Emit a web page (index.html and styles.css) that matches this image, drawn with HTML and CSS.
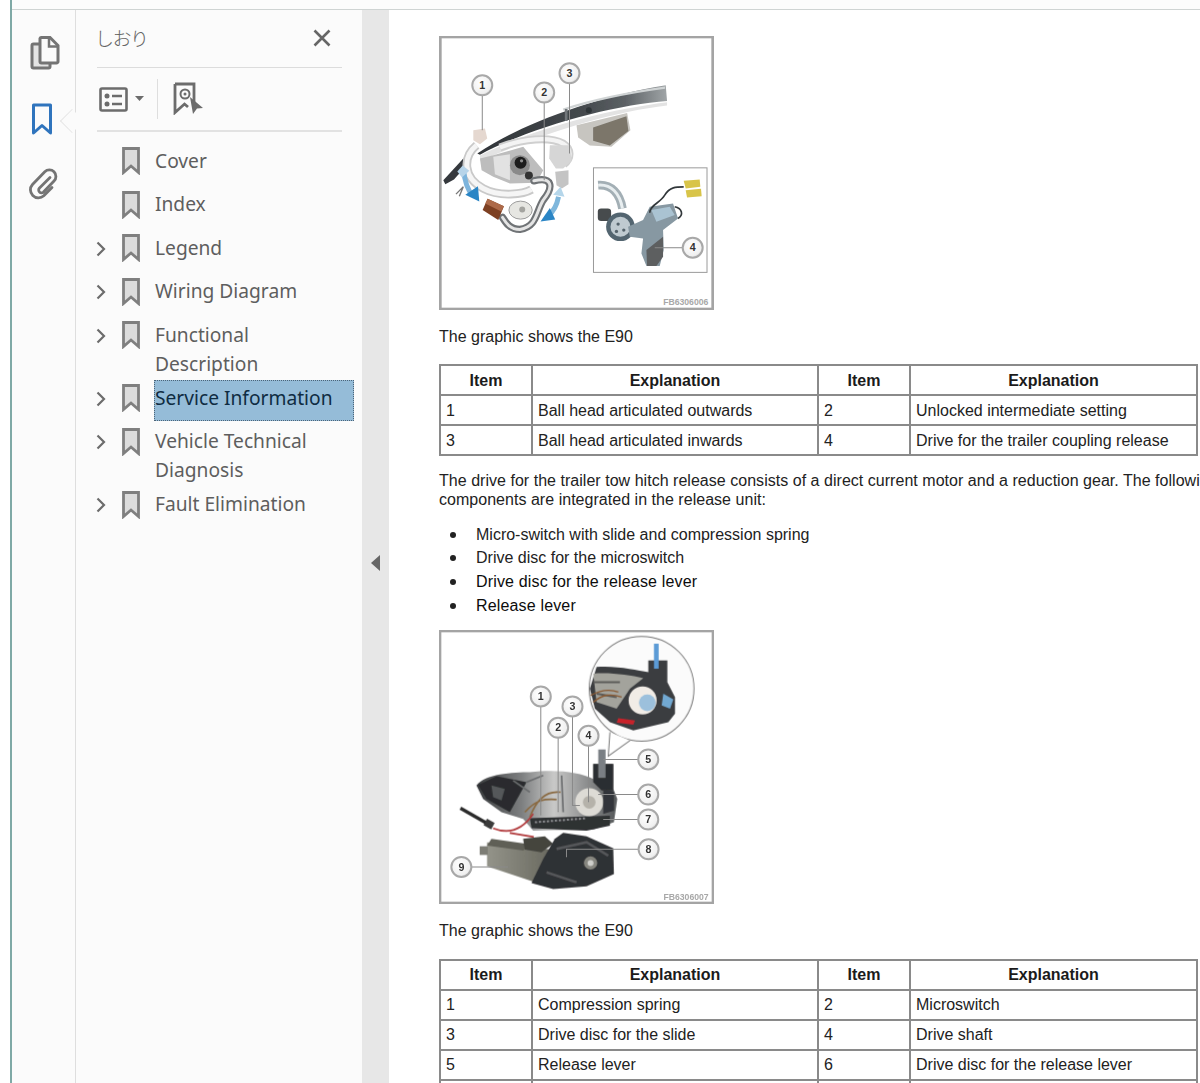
FILE: index.html
```html
<!DOCTYPE html>
<html lang="en">
<head>
<meta charset="utf-8">
<title>Service Information</title>
<link rel="stylesheet" href="styles.css">
</head>
<body>
<div class="window">
  <div class="topbar"></div>
  <div class="app">
    <nav class="rail">
      <svg class="rail-icon rail-pages" viewBox="0 0 30 34" width="30" height="34"><path d="M9 8H3.500A1.500 1.500 0 0 0 2 9.500V30.500A1.500 1.500 0 0 0 3.500 32H18.500A1.500 1.500 0 0 0 20 30.500V27" fill="#e4e4e4" stroke="#747474" stroke-width="3"/><path d="M10 2.500A1.500 1.500 0 0 1 11.500 1.500H20L28 9.500V25.500A1.500 1.500 0 0 1 26.500 27H11.500A1.500 1.500 0 0 1 10 25.500Z" fill="#fbfbfb" stroke="#747474" stroke-width="3"/><path d="M19 2V10.500H28" fill="none" stroke="#747474" stroke-width="2.500"/></svg>
      <svg class="rail-icon rail-mark" viewBox="0 0 22 33" width="22" height="33"><path d="M2.500 2H19.500V30L11 22.500L2.500 30Z" fill="#fbfbfb" stroke="#2f74bd" stroke-width="3" stroke-linejoin="round"/></svg>
      <svg class="rail-icon rail-clip" viewBox="0 0 30 32" width="30" height="32"><path d="M22 9.500L11.500 20a2.800 2.800 0 0 0 4 4L26 13a6.500 6.500 0 0 0 -9.200 -9.200L4.500 16.500a8 8 0 0 0 11.300 11.300L24 19.500" fill="none" stroke="#747474" stroke-width="2.800" stroke-linecap="round"/></svg>
      <span class="notch"></span>
    </nav>

    <aside class="panel">
      <header class="panel-head">
        <span class="panel-title">しおり</span>
        <svg class="close" viewBox="0 0 18 18" width="18" height="18"><path d="M1.500 1.500L16.500 16.500M16.500 1.500L1.500 16.500" stroke="#666" stroke-width="2.600"/></svg>
      </header>
      <div class="tools">
        <svg viewBox="0 0 29 25" width="29" height="25"><rect x="1.500" y="1.500" width="26" height="22" rx="1.500" fill="#fbfbfb" stroke="#6c6c6c" stroke-width="2.600"/><circle cx="8" cy="9" r="2.500" fill="#6c6c6c"/><circle cx="8" cy="17" r="2.500" fill="#6c6c6c"/><path d="M13 9H23M13 17H23" stroke="#6c6c6c" stroke-width="2.500"/></svg>
        <svg class="caret" viewBox="0 0 9 5" width="9" height="5"><path d="M0 0H9L4.500 5Z" fill="#6c6c6c"/></svg>
        <span class="tool-sep"></span>
        <svg class="find" viewBox="0 0 30 33" width="30" height="33"><path d="M2 2H21V23M15 25L11.500 22L2 30.500V2" fill="#fbfbfb" stroke="#6c6c6c" stroke-width="2.800"/><circle cx="12" cy="12" r="4.500" fill="#fbfbfb" stroke="#6c6c6c" stroke-width="2"/><circle cx="12" cy="12" r="1.500" fill="#6c6c6c"/><path d="M17 15L30 26L24 26.500L20 32Z" fill="#6c6c6c"/></svg>
      </div>
      <ul class="tree">
        <li class="node"><span class="twist"></span><svg class="mark" viewBox="0 0 18 28" width="18" height="28"><path d="M1.500 1.500H16.500V25.500L9 19L1.500 25.500Z" fill="#dcdcdc" stroke="#7f7f7f" stroke-width="2.800"/></svg><span class="label">Cover</span></li>
        <li class="node"><span class="twist"></span><svg class="mark" viewBox="0 0 18 28" width="18" height="28"><path d="M1.500 1.500H16.500V25.500L9 19L1.500 25.500Z" fill="#dcdcdc" stroke="#7f7f7f" stroke-width="2.800"/></svg><span class="label">Index</span></li>
        <li class="node"><svg class="twist" viewBox="0 0 10 16" width="10" height="16"><path d="M1.500 1.500L8 8L1.500 14.500" fill="none" stroke="#6c6c6c" stroke-width="2.200"/></svg><svg class="mark" viewBox="0 0 18 28" width="18" height="28"><path d="M1.500 1.500H16.500V25.500L9 19L1.500 25.500Z" fill="#dcdcdc" stroke="#7f7f7f" stroke-width="2.800"/></svg><span class="label">Legend</span></li>
        <li class="node"><svg class="twist" viewBox="0 0 10 16" width="10" height="16"><path d="M1.500 1.500L8 8L1.500 14.500" fill="none" stroke="#6c6c6c" stroke-width="2.200"/></svg><svg class="mark" viewBox="0 0 18 28" width="18" height="28"><path d="M1.500 1.500H16.500V25.500L9 19L1.500 25.500Z" fill="#dcdcdc" stroke="#7f7f7f" stroke-width="2.800"/></svg><span class="label">Wiring Diagram</span></li>
        <li class="node"><svg class="twist" viewBox="0 0 10 16" width="10" height="16"><path d="M1.500 1.500L8 8L1.500 14.500" fill="none" stroke="#6c6c6c" stroke-width="2.200"/></svg><svg class="mark" viewBox="0 0 18 28" width="18" height="28"><path d="M1.500 1.500H16.500V25.500L9 19L1.500 25.500Z" fill="#dcdcdc" stroke="#7f7f7f" stroke-width="2.800"/></svg><span class="label">Functional Description</span></li>
        <li class="node"><svg class="twist" viewBox="0 0 10 16" width="10" height="16"><path d="M1.500 1.500L8 8L1.500 14.500" fill="none" stroke="#6c6c6c" stroke-width="2.200"/></svg><svg class="mark" viewBox="0 0 18 28" width="18" height="28"><path d="M1.500 1.500H16.500V25.500L9 19L1.500 25.500Z" fill="#dcdcdc" stroke="#7f7f7f" stroke-width="2.800"/></svg><span class="label selected">Service Information</span></li>
        <li class="node"><svg class="twist" viewBox="0 0 10 16" width="10" height="16"><path d="M1.500 1.500L8 8L1.500 14.500" fill="none" stroke="#6c6c6c" stroke-width="2.200"/></svg><svg class="mark" viewBox="0 0 18 28" width="18" height="28"><path d="M1.500 1.500H16.500V25.500L9 19L1.500 25.500Z" fill="#dcdcdc" stroke="#7f7f7f" stroke-width="2.800"/></svg><span class="label">Vehicle Technical Diagnosis</span></li>
        <li class="node"><svg class="twist" viewBox="0 0 10 16" width="10" height="16"><path d="M1.500 1.500L8 8L1.500 14.500" fill="none" stroke="#6c6c6c" stroke-width="2.200"/></svg><svg class="mark" viewBox="0 0 18 28" width="18" height="28"><path d="M1.500 1.500H16.500V25.500L9 19L1.500 25.500Z" fill="#dcdcdc" stroke="#7f7f7f" stroke-width="2.800"/></svg><span class="label">Fault Elimination</span></li>
      </ul>
    </aside>

    <div class="gutter"><svg viewBox="0 0 9 16" width="9" height="16"><path d="M9 0V16L0 8Z" fill="#666"/></svg></div>

    <main class="doc">
      <svg class="figure" viewBox="28 17 824 823" width="275" height="274">
        <defs>
          <filter id="soft" x="-5%" y="-5%" width="110%" height="110%"><feGaussianBlur stdDeviation="2"/></filter>
          <linearGradient id="bar" x1="0" x2="1" y1="0" y2="0"><stop offset="0" stop-color="#303438"/><stop offset=".55" stop-color="#44494d"/><stop offset=".78" stop-color="#5c6165"/><stop offset="1" stop-color="#a0a5a7"/></linearGradient>
          <radialGradient id="ball" cx=".42" cy=".38" r=".72"><stop offset="0" stop-color="#fff"/><stop offset=".72" stop-color="#f0f0f0"/><stop offset="1" stop-color="#bcbcbc"/></radialGradient>
          <linearGradient id="motor" x1="0" x2="1"><stop offset="0" stop-color="#94948a"/><stop offset="1" stop-color="#6a6a60"/></linearGradient>
          <linearGradient id="case" x1="0" x2="1"><stop offset="0" stop-color="#3b3d3f"/><stop offset=".32" stop-color="#7d7f80"/><stop offset=".55" stop-color="#c9c9c8"/><stop offset="1" stop-color="#55585a"/></linearGradient>
        </defs>
        <rect x="31" y="20" width="818" height="817" fill="#fff" stroke="#a4a4a4" stroke-width="8"/>
        <g filter="url(#soft)">
          <path d="M40 450L100 385L118 396L72 448L46 462Z" fill="#34383c"/>
          <path d="M78 492L100 470L88 498" fill="none" stroke="#777" stroke-width="4"/>
          <path d="M440 285L592 248L602 300L545 350L480 346L445 322Z" fill="#c7c5c0"/>
          <path d="M490 292L590 258L596 302L540 346L490 332Z" fill="#7b766b"/>
          <path d="M150 376C300 300 520 240 712 216V226C540 246 340 310 150 392Z" fill="#e3e3e3"/>
          <path d="M142 370C260 290 470 205 708 165L712 212C560 222 300 290 150 374Z" fill="url(#bar)"/>
          <path d="M400 238C500 205 610 185 706 172" fill="none" stroke="#cfd3d4" stroke-width="7"/>
          <circle cx="477" cy="240" r="9" fill="#2f3437"/>
          <rect x="405" y="236" width="8" height="36" fill="#71767a"/>

          <path d="M210 352C280 325 360 318 400 340C425 356 425 385 402 402" fill="none" stroke="#cfcfcf" stroke-width="24"/>
          <path d="M210 352C280 325 360 318 400 340C425 356 425 385 402 402" fill="none" stroke="#f4f4f4" stroke-width="13"/>
          <path d="M140 345C98 380 98 442 160 475C210 502 282 492 305 478" fill="none" stroke="#c9c9c9" stroke-width="26"/>
          <path d="M140 345C98 380 98 442 160 475C210 502 282 492 305 478" fill="none" stroke="#f5f5f5" stroke-width="15"/>
          <path d="M130 300L165 295L172 325L150 342L130 330Z" fill="#e5d8d0"/>
          <path d="M360 345H420L425 392L400 415H378L358 385Z" fill="#d6d6d6"/>
          <path d="M376 425L416 420L416 462L396 475L380 465Z" fill="#c4c4c4"/>
          <path d="M150 385L190 375L280 350L340 420L320 458L240 460L190 440L155 420Z" fill="#bdbdbd"/>
          <path d="M190 380L240 372L240 450L195 432Z" fill="#e2e2e2"/>
          <circle cx="270" cy="405" r="30" fill="#8a8a8a"/>
          <circle cx="272" cy="398" r="18" fill="#1c1c1c"/>
          <circle cx="275" cy="392" r="5" fill="#8c8c8c"/>
          <circle cx="297" cy="436" r="12" fill="#333"/>
          <path d="M312 452C368 438 372 470 340 510C318 545 322 590 270 598C240 598 228 578 218 562" fill="none" stroke="#6f7376" stroke-width="22" stroke-linecap="round"/>
          <path d="M312 452C368 438 372 470 340 510C318 545 322 590 270 598C240 598 228 578 218 562" fill="none" stroke="#e4e4e4" stroke-width="9" stroke-linecap="round"/>
          <ellipse cx="272" cy="540" rx="35" ry="27" fill="#e6e6e2" stroke="#9b9b9b" stroke-width="3"/>
          <circle cx="277" cy="538" r="9" fill="#a3a39f"/>
          <path d="M173 506L222 528L205 570L158 540Z" fill="#7d3f24"/>
          <path d="M173 506L222 528L214 544L166 520Z" fill="#ad6a48"/>
          <path d="M100 416C104 452 114 482 128 496" fill="none" stroke="#7db4dc" stroke-width="15"/>
          <path d="M106 494L148 514L144 468Z" fill="#2a85c5"/>
          <path d="M96 442L118 422L98 406L82 424Z" fill="#b7d4e9"/>
          <path d="M356 556C376 540 382 520 386 500" fill="none" stroke="#7fb7dc" stroke-width="15"/>
          <path d="M332 574L376 568L360 534Z" fill="#2a85c5"/>
          <path d="M370 494L404 500L392 470Z" fill="#b5d6ea"/>
        </g>
        <rect x="491" y="413" width="341" height="314" fill="#fff" stroke="#9a9a9a" stroke-width="3"/>
        <g filter="url(#soft)">
          <path d="M505 465C545 462 570 490 578 535" fill="none" stroke="#a3afb5" stroke-width="26"/>
          <path d="M505 465C545 462 570 490 578 535" fill="none" stroke="#e8eef0" stroke-width="9"/>
          <rect x="504" y="535" width="40" height="38" rx="10" fill="#474b4d"/>
          <circle cx="572" cy="590" r="43" fill="#526570"/>
          <circle cx="572" cy="590" r="30" fill="#bfcad0"/>
          <circle cx="565" cy="582" r="5" fill="#55646c"/><circle cx="582" cy="600" r="5" fill="#55646c"/><circle cx="560" cy="604" r="5" fill="#55646c"/>
          <path d="M595 590L640 570L660 530L730 520L745 565L700 600L702 660L690 708H650L635 670L640 625L600 620Z" fill="#8798a2"/>
          <path d="M650 660L700 620V680L680 708H652Z" fill="#5d5f61"/>
          <path d="M665 540L720 530L735 555L680 575Z" fill="#aac3d2"/>
          <path d="M660 548C660 525 690 520 705 495C720 470 740 470 762 470M745 565C762 555 758 535 735 530" fill="none" stroke="#33383b" stroke-width="5"/>
          <path d="M762 452L810 448L812 470L768 475Z" fill="#d8c44a"/>
          <path d="M768 480L814 476L816 498L772 502Z" fill="#d8c44a"/>
        </g>
        <g class="leaders">
          <path d="M157 195V300M343 217V450M419 160V370M760 653H675"/>
        </g>
        <g class="callouts">
          <circle cx="157" cy="165" r="30"/><text x="157" y="176">1</text>
          <circle cx="343" cy="187" r="30"/><text x="343" y="198">2</text>
          <circle cx="419" cy="129" r="30"/><text x="419" y="140">3</text>
          <circle cx="789" cy="653" r="30"/><text x="789" y="664">4</text>
        </g>
        <text class="fig-code" x="836" y="824">FB6306006</text>
      </svg>

      <p class="caption">The graphic shows the E90</p>

      <table class="items">
        <thead><tr><th class="c-item">Item</th><th class="c-text">Explanation</th><th class="c-item">Item</th><th class="c-last">Explanation</th></tr></thead>
        <tbody>
          <tr><td>1</td><td>Ball head articulated outwards</td><td>2</td><td>Unlocked intermediate setting</td></tr>
          <tr><td>3</td><td>Ball head articulated inwards</td><td>4</td><td>Drive for the trailer coupling release</td></tr>
        </tbody>
      </table>

      <p class="para">The drive for the trailer tow hitch release consists of a direct current motor and a reduction gear. The following<br>components are integrated in the release unit:</p>

      <ul class="bullets">
        <li>Micro-switch with slide and compression spring</li>
        <li>Drive disc for the microswitch</li>
        <li class="dark">Drive disc for the release lever</li>
        <li class="dark">Release lever</li>
      </ul>

      <svg class="figure" viewBox="28 14 824 821" width="275" height="274">
        <rect x="31" y="17" width="818" height="815" fill="#fff" stroke="#a4a4a4" stroke-width="8"/>
        <g filter="url(#soft)">
          <circle cx="635" cy="190" r="157" fill="#fbfbfb" stroke="#777" stroke-width="3"/>
          <path d="M540 320L535 392L600 345" fill="#fff" stroke="#777" stroke-width="3"/>
          <path d="M500 125C560 120 620 135 655 140V105H712V170L735 215V265L715 290L610 315L540 290L495 250L480 190Z" fill="#3b3d40"/>
          <path d="M490 145C540 140 600 150 640 158L600 190L560 250L500 230Z" fill="#a3a39c"/>
          <path d="M490 170H570M500 205L560 215" fill="none" stroke="#5c5c5a" stroke-width="6"/>
          <rect x="672" y="55" width="14" height="75" fill="#5b9bd6"/>
          <circle cx="638" cy="225" r="42" fill="#f1ece6"/>
          <circle cx="652" cy="232" r="25" fill="#9cc0dc"/>
          <path d="M700 205L730 222L720 250L695 240Z" fill="#72a9d2"/>
          <path d="M565 278L615 285L610 298L560 292Z" fill="#c8242c"/>
          <path d="M482 210C510 195 540 190 565 200M490 230C520 205 545 205 575 215" fill="none" stroke="#8a5a33" stroke-width="4"/>

          <path d="M140 480C165 445 250 440 300 440C380 430 450 440 490 460V415H550V490L562 520L552 590L490 612L310 615L280 580L215 560L160 520Z" fill="url(#case)"/>
          <path d="M145 478L200 452L290 470L240 560L170 520Z" fill="#2a2c2e"/>
          <path d="M185 480L225 490L215 525L190 515Z" fill="#55585a"/>
          <path d="M290 470L340 450M250 465L300 500M395 450L400 560" fill="none" stroke="#6a6c6e" stroke-width="5"/>
          <path d="M300 578L540 570V600L470 615L305 608Z" fill="#2e3032"/>
          <path d="M315 590L470 578" fill="none" stroke="#8a8c8e" stroke-width="6" stroke-dasharray="7 5"/>
          <path d="M490 415H550V495H515L490 470Z" fill="#2c2e30"/>
          <rect x="505" y="372" width="22" height="85" fill="#7a7f84"/>
          <circle cx="478" cy="530" r="42" fill="#dddbd5"/>
          <circle cx="478" cy="530" r="19" fill="#b5b2aa"/>
          <path d="M520 490L552 498L552 555L520 565Z" fill="#33353a"/>
          <path d="M300 575C320 520 350 495 392 500M285 560C320 520 345 520 380 522" fill="none" stroke="#8a6a42" stroke-width="5"/>
          <path d="M92 548L180 598" stroke="#2a2a2a" stroke-width="10"/>
          <rect x="165" y="584" width="26" height="22" transform="rotate(28 177 595)" fill="#3a3a3a"/>
          <path d="M190 608C240 628 280 610 310 565M240 622L312 634" fill="none" stroke="#b0383a" stroke-width="5"/>
          <path d="M172 650L285 660L362 672L332 775L172 722Z" fill="url(#motor)"/>
          <path d="M185 640L290 655L282 675L172 660Z" fill="#5f5f56"/>
          <rect x="150" y="662" width="24" height="26" fill="#7d7d75"/>
          <path d="M280 640L345 632L370 655L335 680L285 672Z" fill="#44443e"/>
          <path d="M375 640L400 622L470 632L550 668L552 745L470 782L370 790L305 772L340 700Z" fill="#2f3134"/>
          <path d="M380 670L470 650L535 690M350 740L440 770" fill="none" stroke="#55575a" stroke-width="8"/>
          <circle cx="482" cy="712" r="20" fill="#86867f"/>
          <circle cx="482" cy="712" r="9" fill="#cfcfcb"/>
        </g>
        <g class="leaders">
          <path d="M333 243V570M385 337V560M428 273V540H450M476 361V530M625 402H520M625 507H505M625 582H520M626 671H410V695M125 724H235"/>
        </g>
        <g class="callouts">
          <circle cx="333" cy="213" r="30"/><text x="333" y="224">1</text>
          <circle cx="385" cy="307" r="30"/><text x="385" y="318">2</text>
          <circle cx="428" cy="243" r="30"/><text x="428" y="254">3</text>
          <circle cx="476" cy="331" r="30"/><text x="476" y="342">4</text>
          <circle cx="655" cy="402" r="30"/><text x="655" y="413">5</text>
          <circle cx="655" cy="507" r="30"/><text x="655" y="518">6</text>
          <circle cx="655" cy="582" r="30"/><text x="655" y="593">7</text>
          <circle cx="656" cy="671" r="30"/><text x="656" y="682">8</text>
          <circle cx="95" cy="724" r="30"/><text x="95" y="735">9</text>
        </g>
        <text class="fig-code" x="836" y="822">FB6306007</text>
      </svg>

      <p class="caption">The graphic shows the E90</p>

      <table class="items items-lower">
        <thead><tr><th class="c-item">Item</th><th class="c-text">Explanation</th><th class="c-item">Item</th><th class="c-last">Explanation</th></tr></thead>
        <tbody>
          <tr><td>1</td><td>Compression spring</td><td>2</td><td>Microswitch</td></tr>
          <tr><td>3</td><td>Drive disc for the slide</td><td>4</td><td>Drive shaft</td></tr>
          <tr><td>5</td><td>Release lever</td><td>6</td><td>Drive disc for the release lever</td></tr>
          <tr><td>&nbsp;</td><td></td><td></td><td></td></tr>
        </tbody>
      </table>
    </main>
  </div>
</div>
</body>
</html>
```

FILE: styles.css
```css
* { box-sizing: border-box; }
html, body { margin: 0; height: 100%; overflow: hidden; background: #fff; }
body { width: 1200px; height: 1083px; }

.window {
  margin-left: 10px;
  height: 1083px;
  border-left: 2px solid #7fa9a6;
  display: flex;
  flex-direction: column;
}
.topbar { height: 10px; flex: none; background: #fcfcfc; border-bottom: 1px solid #cfd4d3; }
.app { flex: 1; display: flex; min-height: 0; }

.rail {
  position: relative;
  flex: none;
  width: 64px;
  background: #fbfbfb;
  border-right: 1px solid #dedede;
  display: flex;
  flex-direction: column;
}
.rail-icon { display: block; flex: none; }
.rail-pages { margin: 26px 0 0 18px; }
.rail-mark { margin: 33px 0 0 19px; }
.rail-clip { margin: 32px 0 0 16px; }
.notch {
  position: absolute;
  top: 102px;
  right: -6px;
  width: 18px;
  height: 18px;
  background: #fbfbfb;
  border-left: 1px solid #e6e6e6;
  border-bottom: 1px solid #e6e6e6;
  transform: rotate(45deg) scale(.95);
}

.panel {
  flex: none;
  width: 286px;
  background: #fbfbfb;
  padding: 0 20px 0 21px;
  font-family: "Noto Sans", sans-serif;
}
.panel-head {
  height: 58px;
  display: flex;
  align-items: center;
  justify-content: space-between;
  padding-right: 11px;
  border-bottom: 1px solid #dcdcdc;
}
.panel-title {
  font-family: "Noto Sans CJK JP", sans-serif;
  font-size: 19px;
  font-weight: 300;
  color: #666;
  letter-spacing: -1.500px;
  margin: -3px 0 0 -2px;
}
.close { margin-top: -1px; }
.tools {
  height: 64px;
  display: flex;
  align-items: center;
  padding-left: 2px;
  border-bottom: 2px solid #e2e2e2;
}
.caret { margin: 0 0 2px 7px; }
.tool-sep { width: 1px; height: 40px; background: #dedede; margin: 0 15px 0 13px; }
.find { margin-top: -1px; }

.tree {
  list-style: none;
  margin: 6.250px -12px 0 0;
  padding: 0;
}
.node {
  display: flex;
  align-items: flex-start;
  min-height: 43.500px;
}
.twist { flex: none; width: 10px; height: 16px; margin: 15.500px 16.500px 0 -1.500px; }
.mark { flex: none; margin: 8.750px 15px 0 0; }
.label {
  flex: none;
  width: 200px;
  margin: 4.750px 0 -11.250px -1px;
  padding: 1.500px 0 8px;
  border: 1px solid transparent;
  font-size: 19.200px;
  line-height: 29px;
  color: #5e5e5e;
}
.label.selected {
  background: #95bcd8;
  border: 1px dotted #4c6478;
  color: #0f2c42;
}

.gutter {
  flex: none;
  width: 27px;
  background: #e7e7e7;
  display: flex;
  align-items: center;
  padding: 0 0 0 9px;
  margin: 0;
}
.gutter svg { margin-top: 33px; }

.doc {
  flex: 1;
  min-width: 0;
  overflow: hidden;
  background: #fff;
  padding: 26px 0 0 50px;
  font-family: "Liberation Sans", Arial, sans-serif;
  font-size: 16px;
  color: #222;
}
.figure { display: block; }
.figure text { font-family: "Liberation Sans", Arial, sans-serif; }
.leaders path { fill: none; stroke: #8a8a8a; stroke-width: 3; }
.callouts circle { fill: url(#ball); stroke: #a8a8a8; stroke-width: 6; }
.callouts text { font-size: 32px; font-weight: 700; fill: #333; text-anchor: middle; }
.fig-code { font-size: 26px; font-weight: 700; fill: #a8a8a8; text-anchor: end; }

.caption { margin: 17px 0 0; line-height: 20px; white-space: nowrap; }

.items {
  margin-top: 17px;
  width: 757px;
  table-layout: fixed;
  border-collapse: collapse;
  border: 2px solid #808080;
}
.items-lower { margin-top: 18px; }
.items th, .items td {
  border: 2px solid #8a8a8a;
  height: 30px;
  padding: 1px 0 0 5px;
  line-height: 20px;
  font-size: 16px;
  white-space: nowrap;
}
.items th { font-weight: 700; text-align: center; color: #1b1b1b; padding: 1px 0 0; }
.c-item { width: 92px; }
.c-text { width: 286px; }
.c-last { width: 287px; }

.para { margin: 15px 0 0; line-height: 19px; width: 800px; white-space: nowrap; letter-spacing: .03px; }
.bullets { list-style: none; margin: 14px 0 0; padding: 0; }
.bullets li { display: flex; align-items: center; height: 23.670px; }
.bullets li.dark { color: #0c0c0c; letter-spacing: .16px; }
.bullets li::before {
  content: "";
  flex: none;
  width: 6px;
  height: 6px;
  border-radius: 50%;
  background: #222;
  margin: 0 20px 0 11px;
}
.bullets + .figure { margin-top: 12px; }
```
